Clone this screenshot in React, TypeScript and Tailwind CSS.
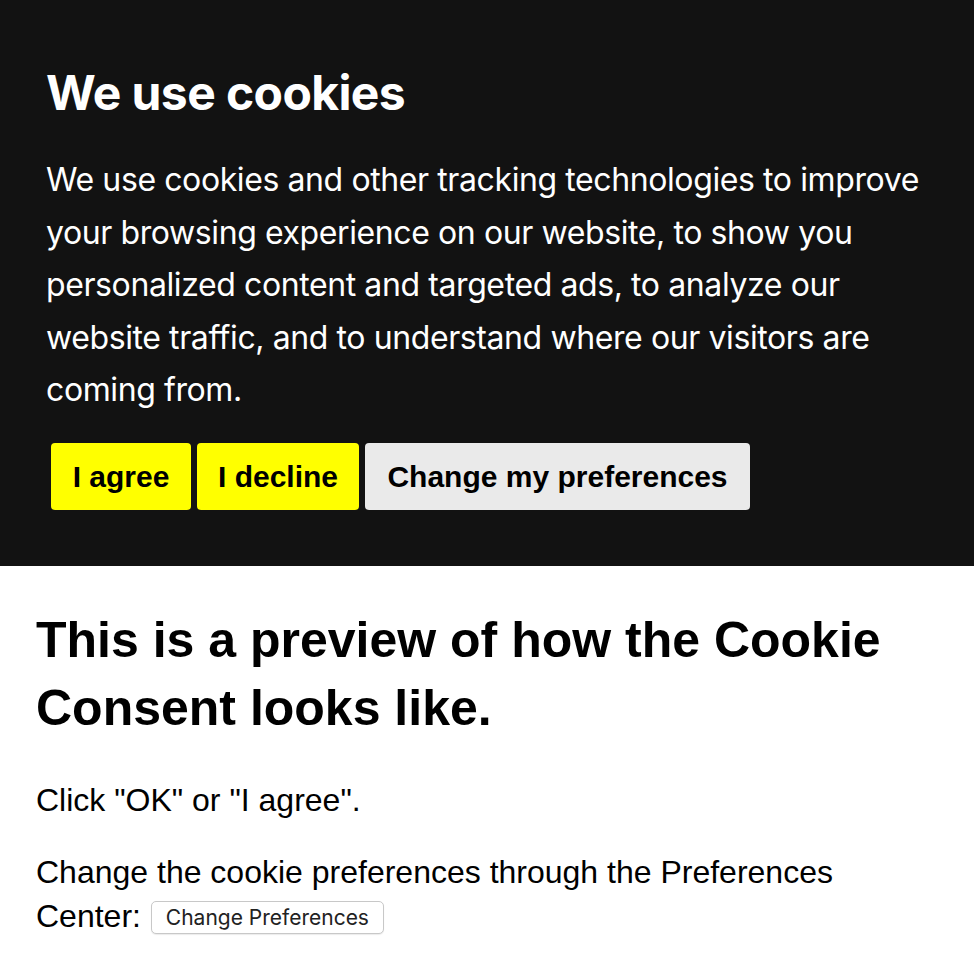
export default function App() {
    return (
        <main className="min-h-screen bg-white">
            <div className="bg-[#121212] px-[46px] pt-[58px] pb-[56px] text-white font-['Inter',sans-serif]">
                <h1 className="text-[48px] font-bold leading-[70px] tracking-[-0.6px]">We use cookies</h1>
                <p className="mt-[26px] text-[32px] leading-[52.5px] tracking-[-0.4px] max-w-[900px]">
                    We use cookies and other tracking technologies to improve your browsing experience on our website, to show you personalized content and targeted ads, to analyze our website traffic, and to understand where our visitors are coming from.
                </p>
                <div className="mt-[26px] ml-[5px] flex gap-[6px] font-['Liberation_Sans',sans-serif] text-[30px] font-bold text-black">
                    <button className="h-[67px] w-[140px] rounded-[4px] bg-[#ffff00]">I agree</button>
                    <button className="h-[67px] w-[162px] rounded-[4px] bg-[#ffff00]">I decline</button>
                    <button className="h-[67px] w-[385px] rounded-[4px] bg-[#eaeaea]">Change my preferences</button>
                </div>
            </div>

            <div className="px-[36px] pt-[40px] text-black font-['Liberation_Sans',sans-serif]">
                <h2 className="text-[50px] font-bold leading-[68px]">This is a preview of how the Cookie Consent looks like.</h2>
                <p className="mt-[36px] text-[32px] leading-[44px]">Click "OK" or "I agree".</p>
                <p className="mt-[28px] text-[32px] leading-[44px] max-w-[830px]">
                    Change the cookie preferences through the Preferences Center:{" "}
                    <button className="ml-[1px] align-[2px] h-[33px] px-[14px] rounded-[5px] border border-[#c8c8c8] bg-white text-[21px] leading-[31px] font-['Inter',sans-serif] text-[#222] shadow-[0_1px_1px_rgba(0,0,0,0.08)]">
                        Change Preferences
                    </button>
                </p>
            </div>
        </main>
    );
}
